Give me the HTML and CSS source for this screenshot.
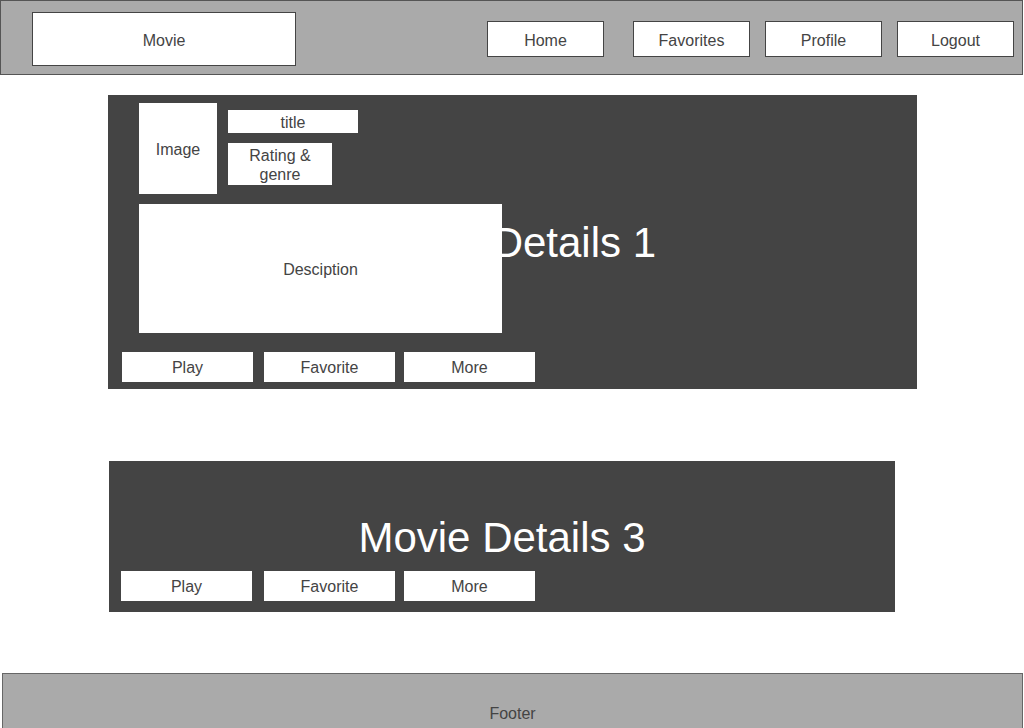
FILE: index.html
```html
<!DOCTYPE html>
<html>
<head>
<meta charset="utf-8">
<link rel="stylesheet" href="styles.css">
</head>
<body>
<header class="topbar">
  <div class="brand">Movie</div>
  <nav class="nav">
    <a class="nav-btn nav-home">Home</a>
    <a class="nav-btn nav-fav">Favorites</a>
    <a class="nav-btn">Profile</a>
    <a class="nav-btn">Logout</a>
  </nav>
</header>

<main class="main">
  <section class="card card-one">
    <h2 class="card-title">Movie Details 1</h2>
    <div class="card-layer">
      <div class="details">
        <div class="top-row">
          <div class="box image">Image</div>
          <div class="meta">
            <div class="box title-box">title</div>
            <div class="box rating">Rating &amp;<br>genre</div>
          </div>
        </div>
        <div class="box desc">Desciption</div>
      </div>
      <div class="actions">
        <button class="act">Play</button>
        <button class="act act-fav">Favorite</button>
        <button class="act act-more">More</button>
      </div>
    </div>
  </section>

  <section class="card card-three">
    <h2 class="card-title">Movie Details 3</h2>
    <div class="card-layer layer-bottom">
      <div class="actions">
        <button class="act">Play</button>
        <button class="act act-fav2">Favorite</button>
        <button class="act act-more">More</button>
      </div>
    </div>
  </section>
</main>

<footer class="footer">Footer</footer>
</body>
</html>
```

FILE: styles.css
```css
* { box-sizing: border-box; }

body {
  margin: 0;
  font-family: "Liberation Sans", Arial, sans-serif;
  color: #444444;
  background: #ffffff;
}

.topbar {
  display: flex;
  align-items: flex-start;
  width: 1023px;
  height: 75px;
  background: #aaaaaa;
  border: 1px solid #555555;
}

.brand {
  margin: 11px 0 0 31px;
  width: 264px;
  height: 54px;
  background: #ffffff;
  border: 1px solid #444444;
  display: flex;
  align-items: center;
  justify-content: center;
  font-size: 16px;
  padding-top: 4px;
}

.nav {
  display: flex;
  margin: 20px 0 0 191px;
  gap: 15px;
}

.nav-btn {
  width: 117px;
  height: 36px;
  background: #ffffff;
  border: 1px solid #444444;
  display: flex;
  align-items: center;
  justify-content: center;
  font-size: 16px;
  padding-top: 3px;
}

.nav-home { margin-right: 14px; }

.main {
  display: flex;
  flex-direction: column;
}

.card {
  display: grid;
  background: #444444;
}

.card > * { grid-area: 1 / 1; }

.card-one {
  margin: 20px 0 0 108px;
  width: 809px;
  height: 294px;
}

.card-three {
  margin: 72px 0 0 109px;
  width: 786px;
  height: 151px;
}

.card-title {
  margin: 0;
  align-self: center;
  justify-self: center;
  color: #ffffff;
  font-weight: normal;
  font-size: 42px;
  line-height: 1;
  padding-top: 2px;
}

.card-layer {
  display: flex;
  flex-direction: column;
  padding: 8px 0 0 14px;
}

.layer-bottom {
  justify-content: flex-end;
  padding: 0 0 11px 12px;
}

.details {
  margin-left: 17px;
  display: flex;
  flex-direction: column;
}

.top-row {
  display: flex;
  gap: 11px;
}

.box {
  background: #ffffff;
  display: flex;
  align-items: center;
  justify-content: center;
  text-align: center;
  font-size: 16px;
  padding-top: 2px;
}

.image {
  width: 78px;
  height: 91px;
}

.meta {
  display: flex;
  flex-direction: column;
  gap: 10px;
  padding-top: 7px;
}

.title-box {
  width: 130px;
  height: 23px;
}

.rating {
  width: 104px;
  height: 42px;
  line-height: 19px;
}

.desc {
  margin-top: 10px;
  width: 363px;
  height: 129px;
}

.actions {
  display: flex;
  gap: 10px;
  margin-top: 19px;
}

.act {
  width: 131px;
  height: 30px;
  border: none;
  background: #ffffff;
  color: #444444;
  font-family: "Liberation Sans", Arial, sans-serif;
  font-size: 16px;
  padding: 2px 0 0;
}

.act-fav { margin-left: 1px; }
.act-fav2 { margin-left: 2px; }
.act-more { margin-left: -1px; }

.footer {
  margin: 61px 0 0 2px;
  width: 1021px;
  height: 80px;
  background: #aaaaaa;
  border: 1px solid #666666;
  display: flex;
  align-items: center;
  justify-content: center;
  font-size: 16px;
  padding-top: 2px;
}
```
